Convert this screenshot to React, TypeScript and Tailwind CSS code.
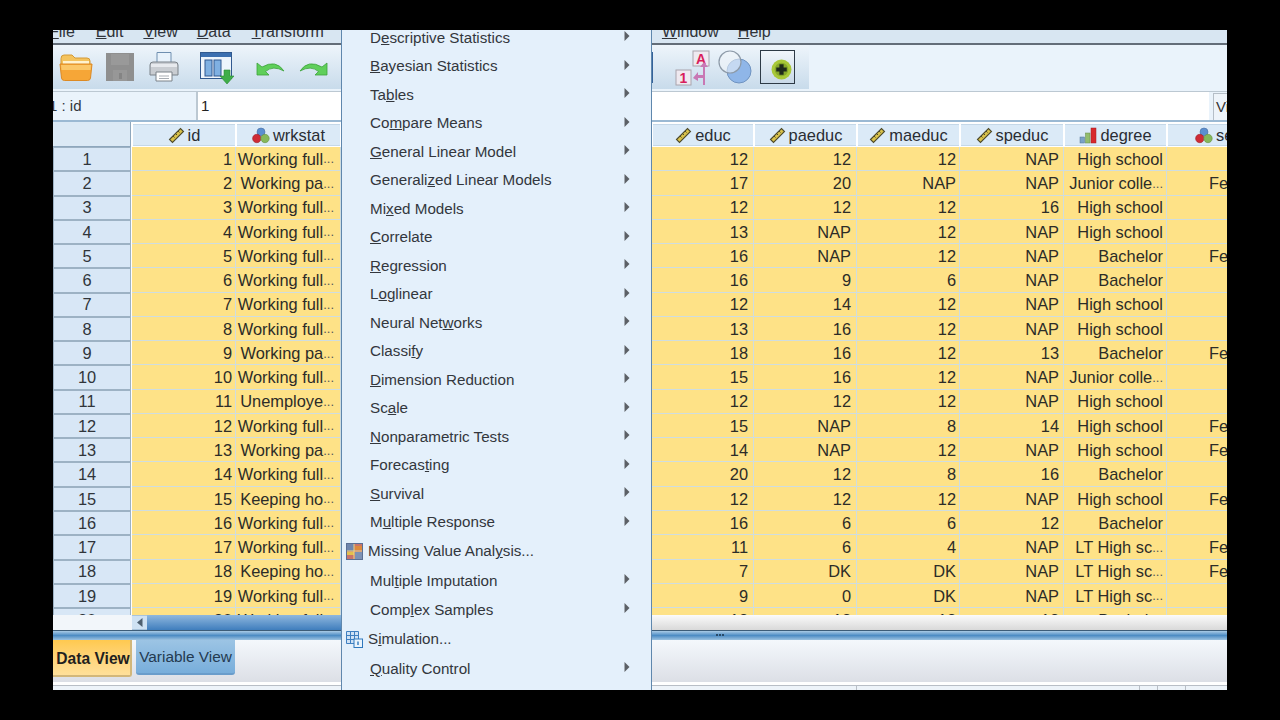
import React from "react";

const FULL = "Working full...";
const PA = "Working pa...";
const KEEP = "Keeping ho...";
const HS = "High school";
const JR = "Junior colle...";
const BA = "Bachelor";
const LT = "LT High sc...";

type Row = [string, string, string, string, string, string, string];
const rows: Row[] = [
  [FULL, "12", "12", "12", "NAP", HS, ""],
  [PA, "17", "20", "NAP", "NAP", JR, "Female"],
  [FULL, "12", "12", "12", "16", HS, ""],
  [FULL, "13", "NAP", "12", "NAP", HS, ""],
  [FULL, "16", "NAP", "12", "NAP", BA, "Female"],
  [FULL, "16", "9", "6", "NAP", BA, ""],
  [FULL, "12", "14", "12", "NAP", HS, ""],
  [FULL, "13", "16", "12", "NAP", HS, ""],
  [PA, "18", "16", "12", "13", BA, "Female"],
  [FULL, "15", "16", "12", "NAP", JR, ""],
  ["Unemploye...", "12", "12", "12", "NAP", HS, ""],
  [FULL, "15", "NAP", "8", "14", HS, "Female"],
  [PA, "14", "NAP", "12", "NAP", HS, "Female"],
  [FULL, "20", "12", "8", "16", BA, ""],
  [KEEP, "12", "12", "12", "NAP", HS, "Female"],
  [FULL, "16", "6", "6", "12", BA, ""],
  [FULL, "11", "6", "4", "NAP", LT, "Female"],
  [KEEP, "7", "DK", "DK", "NAP", LT, "Female"],
  [FULL, "9", "0", "DK", "NAP", LT, ""],
  [FULL, "12", "12", "12", "12", BA, ""],
];

const Ruler = () => (
  <svg width="17" height="17" viewBox="0 0 17 17" className="shrink-0">
    <path d="M1.5 12.5 12.5 1.5l3 3-11 11z" fill="#d9c24a" stroke="#4d4a2c" strokeWidth="1.1" />
    <path d="M5 9l1.5 1.5M7.5 6.500l1.500 1.500M10 4l1.500 1.500" stroke="#4d4a2c" strokeWidth="1" />
  </svg>
);
const Nominal = () => (
  <svg width="18" height="17" viewBox="0 0 18 17" className="shrink-0">
    <circle cx="9" cy="5" r="4" fill="#5b8fd0" stroke="#4a6f9f" strokeWidth=".6" />
    <circle cx="4.800" cy="11.500" r="4.200" fill="#cf2b35" stroke="#9c2028" strokeWidth=".6" />
    <circle cx="13" cy="11.500" r="4.200" fill="#86b85a" stroke="#678f45" strokeWidth=".6" />
  </svg>
);
const Ordinal = () => (
  <svg width="18" height="17" viewBox="0 0 18 17" className="shrink-0">
    <rect x="1" y="10" width="4.500" height="6" fill="#7ba2c7" stroke="#54738f" strokeWidth=".5" />
    <rect x="6.500" y="6" width="4.500" height="10" fill="#93bd6c" stroke="#638a45" strokeWidth=".5" />
    <rect x="12" y="1" width="5" height="15" fill="#d8282c" stroke="#a31d20" strokeWidth=".5" />
  </svg>
);

const Arrow = () => (
  <svg width="6" height="10" viewBox="0 0 6 10" className="absolute right-[21px] top-[calc(50%-2px)] -translate-y-1/2">
    <path d="M0.500 0 5.500 5 0.500 10z" fill="#5c6066" />
  </svg>
);

const Head = ({ icon, label, align = "center" }: { icon: React.ReactNode; label: string; align?: "center" | "left" }) => (
  <div
    className={`flex items-center gap-[3px] h-[22px] mt-[2px] mx-[1px] pt-[1px] bg-[#dbeaf7] border-b border-t border-[#c5d8e8] text-[#2a2d33] overflow-hidden whitespace-nowrap ${
      align === "center" ? "justify-center" : "justify-start pl-[27px]"
    }`}
  >
    {icon}
    <span>{label}</span>
  </div>
);

const Txt = ({ v }: { v: string }) => {
  if (!v.endsWith("...")) return <>{v}</>;
  return (
    <>
      {v.slice(0, -3)}
      <span className="text-[13px] text-[#55585a]">...</span>
    </>
  );
};

const Cell = ({ v, pad = "pr-[5px]" }: { v: string; pad?: string }) => (
  <div
    className={`h-full bg-[#fee287] border-b border-r border-[#cfdde0] whitespace-nowrap overflow-hidden flex items-center justify-end pt-[1px] text-[#2c2c28] ${pad}`}
  >
    <Txt v={v} />
  </div>
);

type M = { pre: string; u: string; post: string; arrow?: boolean; icon?: "mv" | "sim" };
const menu: M[] = [
  { pre: "D", u: "e", post: "scriptive Statistics", arrow: true },
  { pre: "", u: "B", post: "ayesian Statistics", arrow: true },
  { pre: "Ta", u: "b", post: "les", arrow: true },
  { pre: "Co", u: "m", post: "pare Means", arrow: true },
  { pre: "", u: "G", post: "eneral Linear Model", arrow: true },
  { pre: "Generali", u: "z", post: "ed Linear Models", arrow: true },
  { pre: "Mi", u: "x", post: "ed Models", arrow: true },
  { pre: "", u: "C", post: "orrelate", arrow: true },
  { pre: "", u: "R", post: "egression", arrow: true },
  { pre: "L", u: "o", post: "glinear", arrow: true },
  { pre: "Neural Net", u: "w", post: "orks", arrow: true },
  { pre: "Classi", u: "f", post: "y", arrow: true },
  { pre: "", u: "D", post: "imension Reduction", arrow: true },
  { pre: "Sc", u: "a", post: "le", arrow: true },
  { pre: "", u: "N", post: "onparametric Tests", arrow: true },
  { pre: "Forecas", u: "t", post: "ing", arrow: true },
  { pre: "", u: "S", post: "urvival", arrow: true },
  { pre: "M", u: "u", post: "ltiple Response", arrow: true },
  { pre: "Missing Value Anal", u: "y", post: "sis...", icon: "mv" },
  { pre: "Mul", u: "t", post: "iple Imputation", arrow: true },
  { pre: "Comp", u: "l", post: "ex Samples", arrow: true },
  { pre: "S", u: "i", post: "mulation...", icon: "sim" },
  { pre: "", u: "Q", post: "uality Control", arrow: true },
];

const MvIcon = () => (
  <svg width="17" height="17" viewBox="0 0 17 17" className="shrink-0">
    <rect x=".5" y=".5" width="16" height="16" fill="#c9746a" stroke="#5a6f94" />
    <rect x="1" y="1" width="7" height="7" fill="#6f86ad" />
    <rect x="9" y="9" width="7" height="7" fill="#7d92b5" />
    <path d="M1 9h7v3H1z" fill="#e4c04c" />
    <path d="M9 3h7v4H9z" fill="#dd8a3c" />
    <path d="M8 1v15M1 8h15" stroke="#e8d98a" strokeWidth="1" />
  </svg>
);
const SimIcon = () => (
  <svg width="17" height="17" viewBox="0 0 17 17" className="shrink-0">
    <path d="M.5.5h12v12H.5z" fill="#cfe2f5" stroke="#3f7fc0" />
    <path d="M4.500.5v12M8.500.5v12M.5 4.500h12M.5 8.500h12" stroke="#3f7fc0" />
    <rect x="8" y="8" width="8.500" height="8.500" fill="#eaf4fc" stroke="#2f78bd" />
    <path d="M12 10.500v3.500" stroke="#2f78bd" strokeWidth="1.400" />
  </svg>
);

const Folder = () => (
  <svg width="34" height="30" viewBox="0 0 34 30">
    <path d="M2 6.500Q2 3 5 3h8l3 3h12q3 0 3 3v4H2z" fill="#f4c35e" stroke="#d49a36" />
    <path d="M4 9h26v3H4z" fill="#fff3cf" />
    <path d="M1 12h32l-1.500 14q-.3 2.500-3 2.500H5.500q-2.700 0-3-2.500z" fill="#f6a637" stroke="#dc8a24" />
    <path d="M2 13h30l-.4 5H2.500z" fill="#fbc768" />
  </svg>
);
const Save = () => (
  <svg width="28" height="28" viewBox="0 0 28 28">
    <rect width="28" height="28" fill="#8f8f8f" />
    <rect x="5" y="1" width="18" height="11" fill="#999" />
    <rect x="7" y="17" width="14" height="11" fill="#979797" />
    <rect x="13" y="20" width="3" height="6" fill="#848484" />
  </svg>
);
const Printer = () => (
  <svg width="30" height="32" viewBox="0 0 30 32">
    <path d="M8 1.500h14v11H8z" fill="#e8f2fb" stroke="#6f8fb0" />
    <path d="M1 14q0-3 3-3h22q3 0 3 3v10H1z" fill="#c9cdd2" stroke="#7b8289" />
    <path d="M2 13h26v3H2z" fill="#e7eaee" />
    <path d="M7 21h16v9H7z" fill="#fff" stroke="#7b8289" />
    <path d="M10 25h10M10 27.500h10" stroke="#a8adb3" />
  </svg>
);
const VarIcon = () => (
  <svg width="34" height="33" viewBox="0 0 34 33">
    <rect x=".5" y=".5" width="31" height="26" fill="#eef5fc" stroke="#31598f" />
    <rect x="1" y="1" width="30" height="4" fill="#3b6fb0" />
    <rect x="5" y="8" width="7" height="16" fill="#7fb0e2" stroke="#31598f" />
    <rect x="14" y="8" width="7" height="16" fill="#7fb0e2" stroke="#31598f" />
    <path d="M24 18h6v6h4l-7 8-7-8h4z" fill="#3fae49" stroke="#2a8a34" strokeWidth=".6" />
  </svg>
);
const Undo = () => (
  <svg width="29" height="17" viewBox="0 0 29 17">
    <path d="M1 4v12h12l-3.500-3.500Q17 6 28 12 20 0 6 8z" fill="#5fcf5a" stroke="#3ca23b" strokeWidth=".8" />
  </svg>
);
const Redo = () => (
  <svg width="29" height="17" viewBox="0 0 29 17">
    <path d="M28 4v12H16l3.500-3.500Q12 6 1 12 9 0 23 8z" fill="#5fcf5a" stroke="#3ca23b" strokeWidth=".8" />
  </svg>
);
const ValueLabels = () => (
  <svg width="38" height="37" viewBox="0 0 38 37">
    <rect x="18" y="1" width="16" height="15" fill="#efe9f0" stroke="#a9a4ac" />
    <text x="26" y="13.500" textAnchor="middle" fontSize="14" fontWeight="700" fill="#d81e5b" fontFamily="Liberation Sans">A</text>
    <rect x="1" y="20" width="15" height="15" fill="#efe9f0" stroke="#a9a4ac" />
    <text x="8.500" y="32.500" textAnchor="middle" fontSize="14" fontWeight="700" fill="#d81e5b" fontFamily="Liberation Sans">1</text>
    <path d="M18 28l5-6v3h5v-8h-3l4-5 4 5h-3v18h-2v-7h-5v3z" fill="#c878b4" />
  </svg>
);
const Circles = () => (
  <svg width="34" height="34" viewBox="0 0 34 34">
    <circle cx="21" cy="21" r="12" fill="#8fb6e8" stroke="#6f93c0" />
    <circle cx="12" cy="12" r="11" fill="#f2f6fa" fillOpacity=".55" stroke="#8d9aa8" strokeWidth="1.200" />
  </svg>
);

export default function App() {
  const font = "font-['Liberation_Sans',Arial,sans-serif]";
  const cols = "grid-cols-[79px_104px_105px_311px_102px_103px_103px_104px_103px_61px]";
  return (
    <div className={`w-[1280px] h-[720px] bg-black pt-[30px] pl-[53px] overflow-hidden ${font} text-[16.4px]`}>
      <div className="relative w-[1174px] h-[660px] overflow-hidden bg-[#eaf3fb] flex flex-col">
        {/* menu bar */}
        <div className="h-[15px] shrink-0 bg-[#d8e6f2] border-b-2 border-[#636d78] relative overflow-hidden text-[#30343a] text-[16px] leading-[18px]">
          <div className="flex -mt-[7px] -ml-[4px] whitespace-nowrap">
            <span><u>F</u>ile</span>
            <span className="ml-[21px]"><u>E</u>dit</span>
            <span className="ml-[20px]"><u>V</u>iew</span>
            <span className="ml-[19px]"><u>D</u>ata</span>
            <span className="ml-[21px]"><u>T</u>ransform</span>
            <span className="ml-[338px]"><u>W</u>indow</span>
            <span className="ml-[19px]"><u>H</u>elp</span>
          </div>
        </div>
        {/* toolbar */}
        <div className="h-[46px] shrink-0 flex">
          <div className="relative w-[756px] h-[44px] bg-gradient-to-b from-[#eef5fb] to-[#c8dbeb] flex items-center pl-[6px]">
            <Folder />
            <div className="ml-[13px]"><Save /></div>
            <div className="ml-[15px]"><Printer /></div>
            <div className="ml-[21px] mt-[2px]"><VarIcon /></div>
            <div className="ml-[22px]"><Undo /></div>
            <div className="ml-[14px]"><Redo /></div>
            <div className="ml-[323px] w-[2px] h-[31px] bg-[#34629a]" />
            <div className="ml-[22px] mt-[2px]"><ValueLabels /></div>
            <div className="ml-[5px]"><Circles /></div>
            <div className="ml-[8px] w-[35px] h-[34px] border border-[#2e3a46] bg-gradient-to-b from-[#f1f6fb] to-[#c9d9e8] flex items-center justify-center">
              <svg width="21" height="21" viewBox="0 0 20 20" className="ml-[8px] mt-[5px]">
                <circle cx="10" cy="10" r="9.500" fill="#a8c838" />
                <circle cx="10" cy="10" r="6.500" fill="#86a82a" />
                <path d="M8 5h4v3h3v4h-3v3H8v-3H5V8h3z" fill="#1f2a1a" />
              </svg>
            </div>
          </div>
        </div>
        {/* cell editor */}
        <div className="h-[29px] shrink-0 flex border-t border-[#bcc8d2] items-stretch">
          <div className="w-[143px] flex items-center -ml-[4px] text-[#33373c] text-[15px] whitespace-nowrap pl-0">1 : id</div>
          <div className="w-[2px] bg-[#bcc8d2] ml-[4px]" />
          <div className="w-[1011px] bg-white flex items-center pl-[3px] text-[15px] text-[#222]">1</div>
          <div className="w-[2px] bg-[#eaf3fb]" />
          <div className="flex-1 border-l border-t border-[#b5bec7] bg-[#eef4fa] flex items-center pl-[2px] text-[15px] text-[#333] overflow-hidden mt-[1px] ml-[2px]">Vi</div>
        </div>
        {/* grid */}
        <div className="h-[495px] shrink-0 overflow-hidden border-t-2 border-[#9bb9d3] bg-white">
          <div className={`grid ${cols} h-[25px]`}>
            <div className="bg-[#dbe9f5] border-r border-b border-[#8ea7bd] mr-[1px]" />
            <Head icon={<Ruler />} label="id" />
            <Head icon={<Nominal />} label="wrkstat" />
            <div />
            <Head icon={<Ruler />} label="educ" />
            <Head icon={<Ruler />} label="paeduc" />
            <Head icon={<Ruler />} label="maeduc" />
            <Head icon={<Ruler />} label="speduc" />
            <Head icon={<Ordinal />} label="degree" />
            <Head icon={<Nominal />} label="sex" align="left" />
          </div>
          <div className={`grid ${cols} auto-rows-[24.28px]`}>
            {rows.map((r, i) => (
              <React.Fragment key={i}>
                <div className="h-full bg-[#d8e7f6] border border-[#9db2c4] mr-[1px] mb-[1px] pr-[10px] flex items-center justify-center text-[#30353a]">
                  {i + 1}
                </div>
                <Cell v={String(i + 1)} pad="pr-[3px]" />
                <Cell v={r[0]} pad="pr-[6px]" />
                <div className="bg-[#fee287]" />
                <Cell v={r[1]} />
                <Cell v={r[2]} />
                <Cell v={r[3]} pad="pr-[3px]" />
                <Cell v={r[4]} pad="pr-[4px]" />
                <Cell v={r[5]} pad="pr-[3px]" />
                <div className="h-full bg-[#fee287] border-b border-[#cfdde0] flex items-center pt-[1px] pl-[42px] whitespace-nowrap overflow-hidden text-[#2c2c28]">
                  {r[6]}
                </div>
              </React.Fragment>
            ))}
          </div>
        </div>
        {/* scrollbar row */}
        <div className="h-[15px] shrink-0 flex bg-gradient-to-b from-[#fbfbfb] to-[#d9d9d9]">
          <div className="w-[79px] bg-[#f2f6fa]" />
          <div className="w-[15px] bg-[#cfe2f3] flex items-center justify-center border-y border-[#a9c4dc]">
            <svg width="6" height="9" viewBox="0 0 6 9"><path d="M5.500 0v9L0 4.500z" fill="#4e6070" /></svg>
          </div>
          <div className="w-[209px] bg-gradient-to-b from-[#8fb8de] to-[#3f7ebd]" />
        </div>
        {/* splitter */}
        <div className="h-[10px] shrink-0 border-t-[1px] border-[#3c5c78] bg-gradient-to-b from-[#a9cbe6] via-[#4c8cc4] to-[#9cc2e0] relative">
          <div className="absolute left-[663px] top-[3px] flex gap-[1px]">
            <span className="w-[2px] h-[2px] bg-[#284a69]" />
            <span className="w-[2px] h-[2px] bg-[#284a69]" />
            <span className="w-[2px] h-[2px] bg-[#284a69]" />
          </div>
        </div>
        {/* tabs */}
        <div className="h-[42px] shrink-0 bg-gradient-to-b from-[#f4f8fc] to-[#dcdfe6] flex items-start gap-[4px] whitespace-nowrap">
          <div className="w-[79px] h-[37px] bg-gradient-to-b from-[#ffc94f] to-[#ffe09a] border-r-2 border-b-2 border-[#d2b77a] rounded-br-[3px] flex items-center justify-center font-bold text-[15.6px] text-[#1f1f1f] pt-[2px] pl-[3px]">
            Data View
          </div>
          <div className="w-[99px] h-[35px] bg-gradient-to-b from-[#9cc4e4] to-[#78aedb] rounded-b-[3px] border-b-2 border-[#6a9dcb] flex items-center justify-center text-[15.4px] text-[#243a50]">
            Variable View
          </div>
        </div>
        <div className="h-[3px] shrink-0 bg-white" />
        {/* status */}
        <div className="flex-1 flex border-t border-[#b8bec6] bg-[#edf3f9]">
          <div className="w-[804px] border-r border-[#b8bec6]" />
          <div className="w-[283px] border-r border-[#b8bec6]" />
          <div className="w-[18px] border-r border-[#b8bec6]" />
          <div className="w-[28px] border-r border-[#b8bec6]" />
        </div>
        {/* Analyze dropdown */}
        <div className="absolute left-[288px] top-0 bottom-0 w-[311px] bg-[#e4f0fb] border-x border-[#5f87ad] overflow-hidden text-[15.2px] text-[#33373d]">
          <div className="-mt-[6px]">
            {menu.map((m, i) => (
              <div
                key={i}
                className={`relative flex items-center whitespace-nowrap ${i > 17 ? "h-[29.4px]" : "h-[28.5px]"} ${m.icon ? "pl-[4px] gap-[5px]" : "pl-[28px]"}`}
              >
                {m.icon === "mv" && <MvIcon />}
                {m.icon === "sim" && <SimIcon />}
                <span>
                  {m.pre}
                  <u>{m.u}</u>
                  {m.post}
                </span>
                {m.arrow && <Arrow />}
              </div>
            ))}
          </div>
        </div>
      </div>
    </div>
  );
}
